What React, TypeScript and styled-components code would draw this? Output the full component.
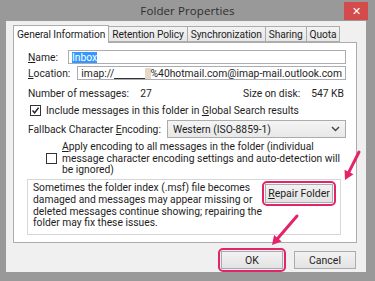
import React from 'react'
import styled, { createGlobalStyle } from 'styled-components'

const PINK = '#e3236a'

const GlobalStyle = createGlobalStyle`
  html, body {
    margin: 0;
    padding: 0;
    background: #999999;
  }
  body {
    font-family: Roboto, "Open Sans", sans-serif;
    color: #1e1e1e;
  }
`

const Frame = styled.div`
  position: relative;
  width: 375px;
  height: 281px;
  background: #999999;
  overflow: hidden;
  display: flex;
  flex-direction: column;
`

const TitleBar = styled.div`
  height: 21px;
  display: grid;
  grid-template-columns: 1fr auto 1fr;
  align-items: center;
`

const Title = styled.div`
  grid-column: 2;
  font-family: "Open Sans", sans-serif;
  font-size: 11.5px;
  color: #2e2e2e;
  letter-spacing: 0.1px;
`

const CloseBtn = styled.div`
  grid-column: 3;
  justify-self: end;
  align-self: start;
  margin: 2px 7px 0 0;
  width: 24px;
  height: 18px;
  background: #d34b4b;
  color: #fff;
  font-size: 11px;
  display: flex;
  align-items: center;
  justify-content: center;
`

const Client = styled.div`
  margin: 0 9px 0 6px;
  height: 251px;
  background: #f0f0f0;
  padding: 5px 9px 0 7px;
  box-sizing: border-box;
  display: flex;
  flex-direction: column;
`

const TabStrip = styled.div`
  display: flex;
  align-items: flex-end;
  height: 16px;
  padding-left: 1px;
  position: relative;
  z-index: 1;
`

const Tab = styled.div<{ $active?: boolean }>`
  height: ${({ $active }) => ($active ? 17 : 14)}px;
  margin-bottom: ${({ $active }) => ($active ? -1 : 0)}px;
  padding: 0 3px;
  border: 1px solid #acacac;
  border-bottom: ${({ $active }) => ($active ? 'none' : '1px solid #acacac')};
  margin-left: -1px;
  background: ${({ $active }) => ($active ? '#ffffff' : 'linear-gradient(#f3f3f3, #e6e6e6)')};
  font-size: 10.2px;
  letter-spacing: -0.1px;
  display: flex;
  align-items: center;
  box-sizing: content-box;
  white-space: nowrap;
`

const Panel = styled.div`
  height: 202px;
  box-sizing: border-box;
  border: 1px solid #acacac;
  background: #ffffff;
  padding: 7px 10px 0 14px;
  display: flex;
  flex-direction: column;
  font-size: 10.3px;
`

const FieldRow = styled.div<{ $gap?: number; $mt?: number; $h?: number }>`
  display: flex;
  align-items: center;
  gap: ${({ $gap }) => $gap ?? 8}px;
  margin-top: ${({ $mt }) => $mt ?? 0}px;
  height: ${({ $h }) => $h ?? 14}px;
  white-space: nowrap;
`

const Key = styled.span`
  text-decoration: underline;
`

const TextInput = styled.div`
  flex: 1;
  height: 14px;
  box-sizing: border-box;
  border: 1px solid #abadb3;
  padding: 0 3px;
  display: flex;
  align-items: center;
  overflow: hidden;
  white-space: nowrap;
`

const Selected = styled.span`
  background: #3399ff;
  color: #fff;
  line-height: 11px;
`

const Blank = styled.span<{ $w: number; $bg?: string }>`
  display: inline-block;
  width: ${({ $w }) => $w}px;
  height: 11px;
  background: ${({ $bg }) => $bg ?? 'transparent'};
  border-bottom: ${({ $bg }) => ($bg ? 'none' : '1px solid #333')};
  box-sizing: border-box;
`

const InfoRow = styled.div`
  display: flex;
  justify-content: space-between;
  align-items: center;
  margin-top: 6px;
  height: 14px;
  padding-right: 2px;
`

const Pair = styled.span`
  display: flex;
  gap: 11px;
`

const CheckRow = styled.label<{ $mt?: number; $indent?: number }>`
  display: flex;
  align-items: center;
  gap: 5px;
  margin-top: ${({ $mt }) => $mt ?? 0}px;
  padding-left: ${({ $indent }) => $indent ?? 0}px;
  white-space: nowrap;
`

const Box = styled.span`
  width: 11px;
  height: 11px;
  box-sizing: border-box;
  border: 1px solid #333;
  background: #fff;
  flex-shrink: 0;
  display: flex;
  align-items: center;
  justify-content: center;
`

const Select = styled.div`
  flex: 1;
  height: 18px;
  box-sizing: border-box;
  border: 1px solid #acacac;
  background: linear-gradient(#f4f4f4, #e8e8e8);
  padding: 0 5px;
  display: flex;
  align-items: center;
  justify-content: space-between;
`

const LongText = styled.div`
  line-height: 11.7px;
  white-space: nowrap;
`

const InfoBox = styled.div`
  margin: 3px 5px 0 -1px;
  height: 56px;
  box-sizing: border-box;
  border: 1px solid #d6d6d6;
  padding: 2px 4px 0 5px;
  display: flex;
  justify-content: space-between;
  align-items: flex-start;
`

const Highlight = styled.div<{ $mt?: number }>`
  border: 2px solid ${PINK};
  border-radius: 5px;
  padding: 1px;
  margin-top: ${({ $mt }) => $mt ?? 0}px;
  display: flex;
`

const Button = styled.div<{ $w: number; $h?: number }>`
  width: ${({ $w }) => $w}px;
  height: ${({ $h }) => $h ?? 18}px;
  box-sizing: border-box;
  border: 1px solid #acacac;
  background: linear-gradient(#f2f2f2, #e3e3e3);
  font-size: 10.5px;
  display: flex;
  align-items: center;
  justify-content: center;
`

const ButtonBar = styled.div`
  display: flex;
  justify-content: flex-end;
  align-items: center;
  gap: 8px;
  margin-top: 5px;
  padding-right: 1px;
`

const Arrows = styled.svg`
  position: absolute;
  left: 0;
  top: 0;
  pointer-events: none;
`

const Arrow = ({ x1, y1, x2, y2 }: { x1: number; y1: number; x2: number; y2: number }) => {
  const a = Math.atan2(y2 - y1, x2 - x1)
  const len = 9
  const w = 5
  const bx = x2 - len * Math.cos(a)
  const by = y2 - len * Math.sin(a)
  const px = -Math.sin(a) * w
  const py = Math.cos(a) * w
  return (
    <g>
      <line x1={x1} y1={y1} x2={bx} y2={by} stroke={PINK} strokeWidth={3} strokeLinecap="round" />
      <polygon points={`${x2},${y2} ${bx + px},${by + py} ${bx - px},${by - py}`} fill={PINK} />
    </g>
  )
}

export default function App() {
  return (
    <>
      <GlobalStyle />
      <Frame>
        <TitleBar>
          <Title>Folder Properties</Title>
          <CloseBtn>✕</CloseBtn>
        </TitleBar>
        <Client>
          <TabStrip>
            <Tab $active>General Information</Tab>
            <Tab>Retention Policy</Tab>
            <Tab>Synchronization</Tab>
            <Tab>Sharing</Tab>
            <Tab>Quota</Tab>
          </TabStrip>
          <Panel>
            <FieldRow $gap={10}>
              <span>
                <Key>N</Key>ame:
              </span>
              <TextInput>
                <Selected>Inbox</Selected>
              </TextInput>
            </FieldRow>
            <FieldRow $mt={2} $gap={7}>
              <span>
                <Key>L</Key>ocation:
              </span>
              <TextInput>
                imap://
                <Blank $w={18} />
                <Blank $w={14} />
                <Blank $w={10} />
                <Blank $w={8} $bg="#e6d8c6" />
                %40hotmail.com@imap-mail.outlook.com
              </TextInput>
            </FieldRow>
            <InfoRow>
              <Pair>
                <span>Number of messages:</span>
                <span>27</span>
              </Pair>
              <Pair>
                <span>Size on disk:</span>
                <span>547 KB</span>
              </Pair>
            </InfoRow>
            <CheckRow $mt={4} $indent={2}>
              <Box>
                <svg width="9" height="9" viewBox="0 0 9 9">
                  <path d="M1.5 4.5 L3.6 6.8 L7.6 1.8" stroke="#222" strokeWidth="1.4" fill="none" />
                </svg>
              </Box>
              <span>
                Include messages in this folder in <Key>G</Key>lobal Search results
              </span>
            </CheckRow>
            <FieldRow $mt={3} $gap={6} $h={18}>
              <span>
                Fallback Character <Key>E</Key>ncoding:
              </span>
              <Select>
                <span>Western (ISO-8859-1)</span>
                <svg width="9" height="6" viewBox="0 0 9 6">
                  <path d="M1 1 L4.5 4.5 L8 1" stroke="#444" strokeWidth="1.4" fill="none" />
                </svg>
              </Select>
            </FieldRow>
            <CheckRow $mt={3} $indent={18}>
              <Box />
              <LongText>
                <Key>A</Key>pply encoding to all messages in the folder (individual
                <br />
                message character encoding settings and auto-detection will
                <br />
                be ignored)
              </LongText>
            </CheckRow>
            <InfoBox>
              <LongText>
                Sometimes the folder index (.msf) file becomes
                <br />
                damaged and messages may appear missing or
                <br />
                deleted messages continue showing; repairing the
                <br />
                folder may fix these issues.
              </LongText>
              <Highlight $mt={-1}>
                <Button $w={68} $h={19}>
                  <span>
                    <Key>R</Key>epair Folder
                  </span>
                </Button>
              </Highlight>
            </InfoBox>
          </Panel>
          <ButtonBar>
            <Highlight>
              <Button $w={62}>OK</Button>
            </Highlight>
            <Button $w={62}>Cancel</Button>
          </ButtonBar>
        </Client>
        <Arrows width="375" height="281">
          <Arrow x1={359} y1={152} x2={345} y2={180} />
          <Arrow x1={297} y1={216} x2={272} y2={245} />
        </Arrows>
      </Frame>
    </>
  )
}
